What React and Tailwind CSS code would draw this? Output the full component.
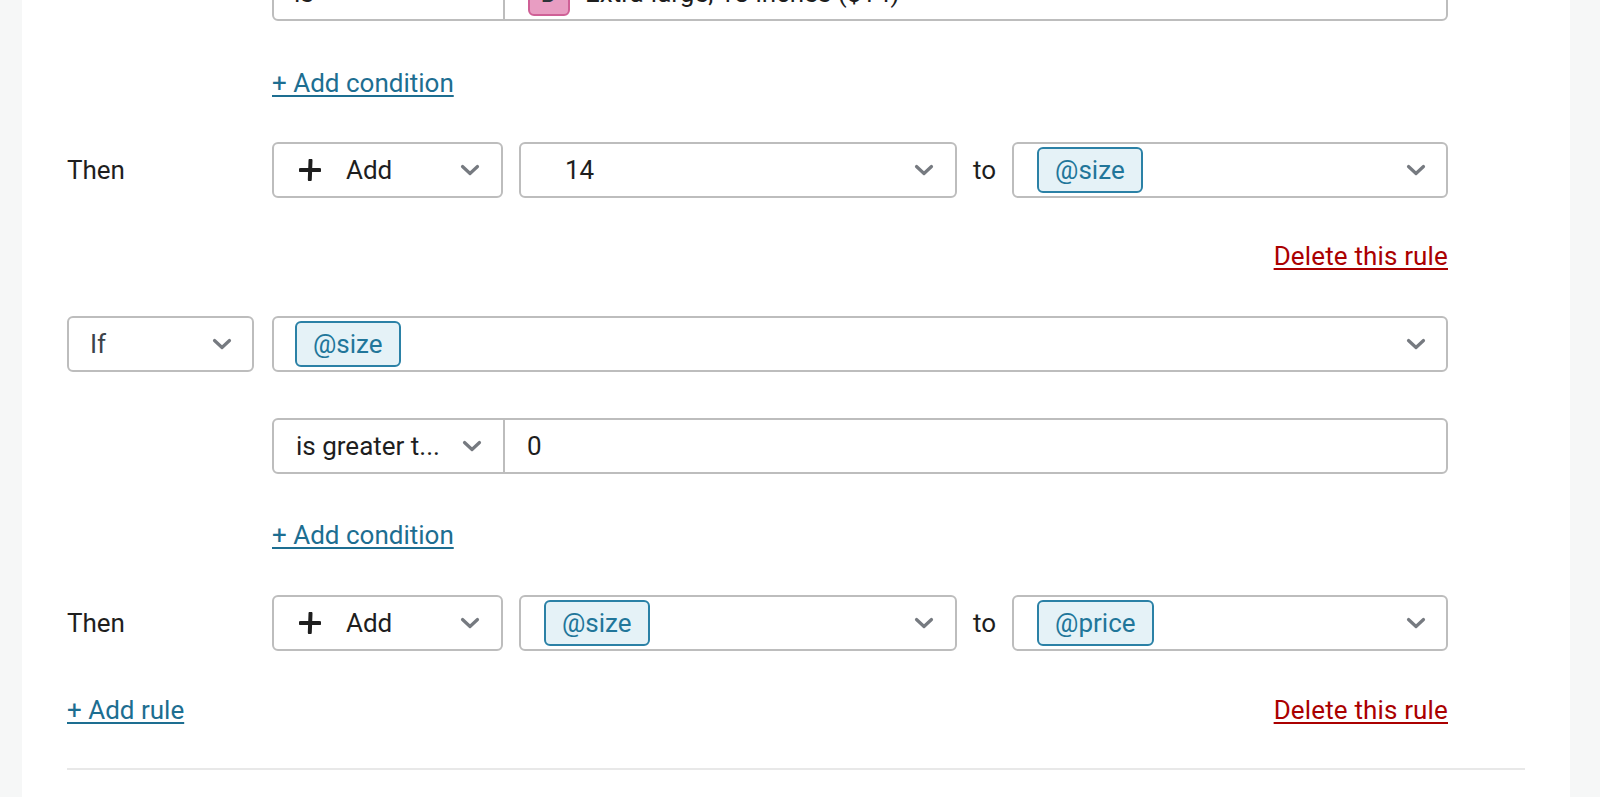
const Chevron = () => (
  <svg width="20" height="12" viewBox="0 0 20 12" fill="none" className="shrink-0">
    <path d="M2.5 2.5l7.5 7 7.5-7" stroke="#767a80" strokeWidth="3.2" strokeLinecap="round" strokeLinejoin="round" />
  </svg>
);

const Plus = () => (
  <svg width="22" height="22" viewBox="0 0 22 22" className="shrink-0">
    <path d="M11.5 1.5L10.8 20.5M1.5 11h19" stroke="#1e1e1e" strokeWidth="4" strokeLinecap="round" />
  </svg>
);

const Token = ({ children }) => (
  <span className="inline-flex items-center h-[46px] px-[16px] rounded-[6px] border-2 border-[#2b81a6] bg-[#e5f2f7] text-[#21769a]">
    {children}
  </span>
);

const Box = ({ className = "", children }) => (
  <div className={`flex items-center h-[56px] border-2 border-[#bdbdbd] rounded-[6px] bg-white ${className}`}>
    {children}
  </div>
);

const Link = ({ children, danger }) => (
  <a
    href="#"
    className={`leading-[32px] underline decoration-2 underline-offset-[3px] ${
      danger ? "text-[#a00] decoration-[#a00] tracking-[0.15px]" : "text-[#1d6e91] decoration-[#1d6e91]"
    }`}
  >
    {children}
  </a>
);

const ThenRow = ({ value, target }) => (
  <div className="flex items-center">
    <div className="w-[205px] shrink-0 text-[#1e1e1e]">Then</div>
    <Box className="w-[231px] pl-[25px] pr-[21px]">
      <Plus />
      <span className="ml-[25px] flex-1 text-[#1e1e1e]">Add</span>
      <Chevron />
    </Box>
    <Box className="w-[438px] ml-[16px] pr-[21px]">{value}</Box>
    <span className="mx-[16px] text-[#1e1e1e]">to</span>
    <Box className="flex-1 pl-[23px] pr-[20px]">
      <div className="flex-1">{target}</div>
      <Chevron />
    </Box>
  </div>
);

export default function App() {
  return (
    <div className="h-[797px] overflow-hidden bg-[#f6f7f7] pl-[22px] pr-[30px] font-['Roboto','Liberation_Sans',sans-serif] text-[26px]">
      <div className="flow-root h-full bg-white pl-[45px] pr-[45px]">
        <div className="w-[1381px] -mt-[35px]">
          <div className="flex">
            <div className="w-[205px] shrink-0" />
            <Box className="flex-1">
              <div className="w-[231px] h-full flex items-center pl-[20px] border-r-2 border-[#bdbdbd] text-[#1e1e1e]">is</div>
              <div className="flex-1 flex items-center pl-[23px]">
                <span className="inline-flex items-center justify-center w-[42px] h-[46px] rounded-[6px] border-2 border-[#cf6096] bg-[#e89dc2] text-[#2c3338]">
                  D
                </span>
                <span className="ml-[15px] text-[#1e1e1e]">Extra-large, 18 inches ($14)</span>
              </div>
            </Box>
          </div>

          <div className="mt-[46px] pl-[205px] leading-[32px]">
            <Link>+ Add condition</Link>
          </div>

          <div className="mt-[43px]">
            <ThenRow
              value={
                <>
                  <span className="flex-1 pl-[44px] text-[#1e1e1e]">14</span>
                  <Chevron />
                </>
              }
              target={<Token>@size</Token>}
            />
          </div>

          <div className="mt-[42px] flex justify-end leading-[32px]">
            <Link danger>Delete this rule</Link>
          </div>

          <div className="mt-[44px] flex">
            <div className="w-[205px] shrink-0">
              <Box className="w-[187px] pl-[21px] pr-[20px]">
                <span className="flex-1 text-[#3c434a]">If</span>
                <Chevron />
              </Box>
            </div>
            <Box className="flex-1 pl-[21px] pr-[20px]">
              <div className="flex-1">
                <Token>@size</Token>
              </div>
              <Chevron />
            </Box>
          </div>

          <div className="mt-[46px] flex">
            <div className="w-[205px] shrink-0" />
            <Box className="flex-1">
              <div className="w-[231px] h-full flex items-center pl-[22px] pr-[21px] border-r-2 border-[#bdbdbd]">
                <span className="flex-1 text-[#1e1e1e]">is greater t...</span>
                <Chevron />
              </div>
              <div className="flex-1 pl-[22px] text-[#1e1e1e]">0</div>
            </Box>
          </div>

          <div className="mt-[45px] pl-[205px] leading-[32px]">
            <Link>+ Add condition</Link>
          </div>

          <div className="mt-[44px]">
            <ThenRow
              value={
                <>
                  <div className="flex-1 pl-[23px]">
                    <Token>@size</Token>
                  </div>
                  <Chevron />
                </>
              }
              target={<Token>@price</Token>}
            />
          </div>

          <div className="mt-[43px] flex justify-between leading-[32px]">
            <Link>+ Add rule</Link>
            <Link danger>Delete this rule</Link>
          </div>
        </div>

        <div className="mt-[42px] h-[2px] bg-[#e8e8e8]" />
      </div>
    </div>
  );
}
